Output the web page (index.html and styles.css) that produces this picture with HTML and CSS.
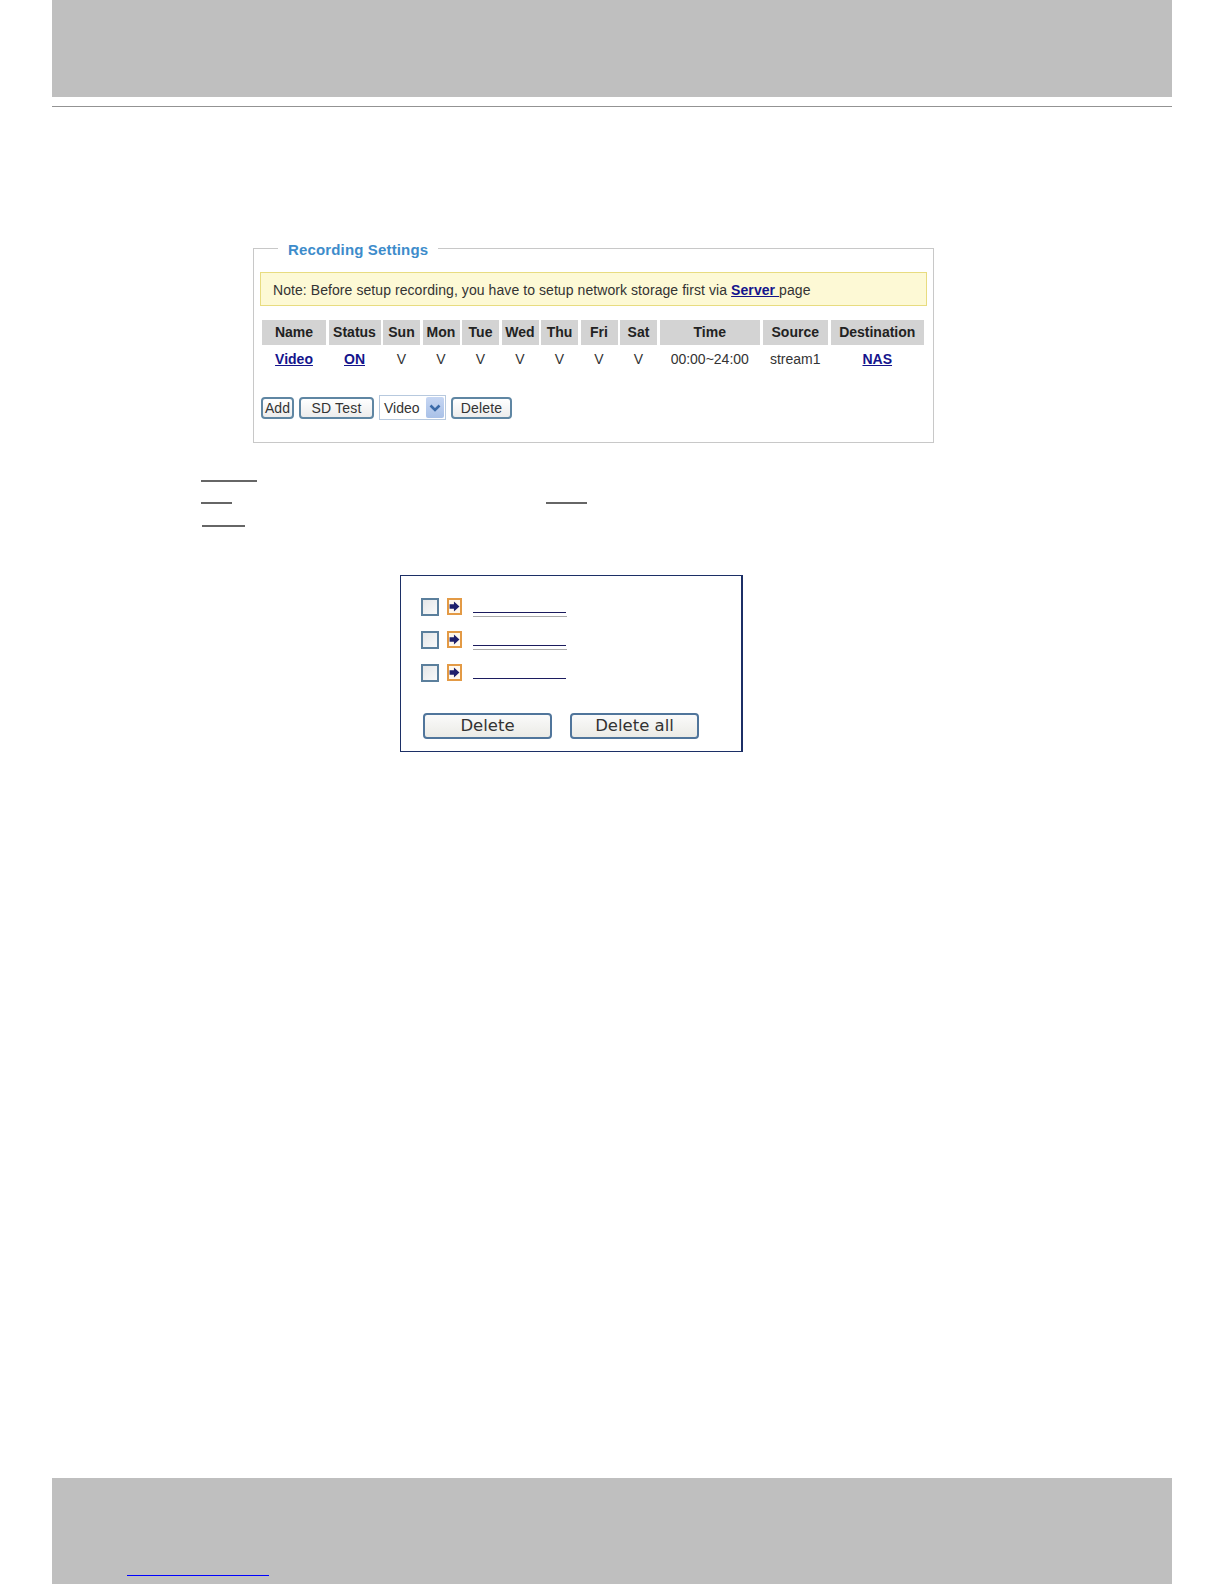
FILE: index.html
```html
<!DOCTYPE html>
<html lang="en">
<head>
<meta charset="utf-8">
<title>Recording Settings</title>
<link rel="stylesheet" href="styles.css">
</head>
<body>
<div class="page">
  <header class="top-band"></header>
  <div class="top-rule"></div>
  <main class="content">
    <fieldset class="panel">
      <legend class="panel-title">Recording Settings</legend>
      <p class="note">Note: Before setup recording, you have to setup network storage first via <a href="#" class="link">Server </a> page</p>
      <div class="rec-table" role="table">
        <div class="cell head">Name</div><div class="cell head">Status</div><div class="cell head">Sun</div><div class="cell head">Mon</div><div class="cell head">Tue</div><div class="cell head">Wed</div><div class="cell head">Thu</div><div class="cell head">Fri</div><div class="cell head">Sat</div><div class="cell head">Time</div><div class="cell head">Source</div><div class="cell head">Destination</div>
        <div class="cell"><a href="#" class="link">Video</a></div><div class="cell"><a href="#" class="link">ON</a></div><div class="cell">V</div><div class="cell">V</div><div class="cell">V</div><div class="cell">V</div><div class="cell">V</div><div class="cell">V</div><div class="cell">V</div><div class="cell">00:00~24:00</div><div class="cell">stream1</div><div class="cell"><a href="#" class="link">NAS</a></div>
      </div>
      <div class="controls">
        <button class="btn btn-add" type="button">Add</button>
        <button class="btn btn-test" type="button">SD Test</button>
        <div class="select"><span class="select-value">Video</span><span class="select-arrow"><svg width="14" height="14" viewBox="0 0 14 14"><path d="M2.5 4.5l4.5 4.5 4.5-4.5" fill="none" stroke="#3a6aa8" stroke-width="2.6"/></svg></span></div>
        <button class="btn btn-del" type="button">Delete</button>
      </div>
    </fieldset>

    <div class="dash-rows">
      <div class="dash-row r1"><span class="dash d1"></span></div>
      <div class="dash-row r2"><span class="dash d2"></span><span class="dash d3"></span></div>
      <div class="dash-row"><span class="dash d4"></span></div>
    </div>

    <section class="files">
      <div class="file-row">
        <span class="check"></span>
        <span class="arrow-icon"><svg width="11" height="11" viewBox="0 0 10 10"><path d="M0.5 3H4.5V0.5L9.5 5L4.5 9.5V7H0.5Z" fill="#1f1f6b"/></svg></span>
        <span class="file-lines"><span class="file-line"></span><span class="file-shadow"></span></span>
      </div>
      <div class="file-row">
        <span class="check"></span>
        <span class="arrow-icon"><svg width="11" height="11" viewBox="0 0 10 10"><path d="M0.5 3H4.5V0.5L9.5 5L4.5 9.5V7H0.5Z" fill="#1f1f6b"/></svg></span>
        <span class="file-lines"><span class="file-line"></span><span class="file-shadow"></span></span>
      </div>
      <div class="file-row">
        <span class="check"></span>
        <span class="arrow-icon"><svg width="11" height="11" viewBox="0 0 10 10"><path d="M0.5 3H4.5V0.5L9.5 5L4.5 9.5V7H0.5Z" fill="#1f1f6b"/></svg></span>
        <span class="file-lines"><span class="file-line"></span></span>
      </div>
      <div class="file-actions">
        <button class="big-btn" type="button">Delete</button>
        <button class="big-btn" type="button">Delete all</button>
      </div>
    </section>
  </main>
  <footer class="bottom-band"><span class="footer-link"></span></footer>
</div>
</body>
</html>
```

FILE: styles.css
```css
* { box-sizing: border-box; }
html, body { margin: 0; padding: 0; background: #fff; }
body { font-family: "Liberation Sans", Arial, sans-serif; color: #333; }
.page { height: 1584px; display: flex; flex-direction: column; overflow: hidden; }

.top-band { height: 97px; margin: 0 52px; background: #bfbfbf; flex: none; }
.top-rule { height: 1px; margin: 9px 52px 0; background: #939393; flex: none; }
.content { flex: 1; padding-top: 131px; }
.bottom-band { height: 106px; margin: 0 52px; background: #bfbfbf; flex: none; padding: 97px 0 0 75px; }
.footer-link { display: block; width: 142px; height: 1px; background: #0000ff; }

.panel { margin: 0 0 0 253px; width: 681px; height: 205px; padding: 14px 6px 0; border: 1px solid #c8c8c8; min-width: 0; }
.panel-title { margin-left: 18px; padding: 0 10px; font-size: 15px; font-weight: bold; color: #3d8ccb; letter-spacing: 0.15px; line-height: 20px; position: relative; top: 2px; }

.note { margin: 0; height: 34px; padding: 1px 0 0 12px; background: #fdf9d5; border: 1px solid #e8dc80; font-size: 14px; line-height: 32px; letter-spacing: 0.07px; color: #333; white-space: nowrap; }
.link { color: #14148c; font-weight: bold; text-decoration: underline; }

.rec-table { display: grid; grid-template-columns: 64px 52px repeat(7, 37px) 100.5px 65.5px 93.5px; grid-template-rows: 25px 28px; column-gap: 2.5px; margin: 14px 0 0 2px; font-size: 14px; }
.cell { text-align: center; line-height: 28px; color: #333; white-space: nowrap; }
.head { line-height: 25px; background: #d3d3d3; color: #222; font-weight: bold; }

.controls { display: flex; align-items: center; gap: 5px; margin: 22px 0 0 1px; height: 25px; }
.btn { height: 22px; padding: 0; font-family: inherit; font-size: 14px; letter-spacing: 0.2px; color: #333; background: linear-gradient(#fff, #ececec); border: 2px solid #5f86a3; border-radius: 4px; }
.btn-add { width: 33px; letter-spacing: 0; }
.btn-test { width: 75px; }
.btn-del { width: 61px; }
.select { width: 67px; height: 25px; display: flex; align-items: center; justify-content: space-between; padding: 0 1px 0 4px; border: 1px solid #b7c9de; font-size: 14px; color: #333; }
.select-arrow { width: 18px; height: 21px; display: flex; align-items: center; justify-content: center; background: linear-gradient(#c6d6f2, #a9c1e8); border-radius: 2px; }

.dash-rows { margin: 37px 0 0 201px; }
.dash-row { display: flex; height: 2px; margin-bottom: 21px; gap: 314px; }
.r1 { margin-bottom: 20px; }
.dash { display: block; height: 2px; background: #666; }
.d1 { width: 56px; }
.d2 { width: 31px; }
.d3 { width: 41px; }
.d4 { width: 43px; margin-left: 1px; }

.files { margin: 48px 0 0 400px; width: 343px; height: 177px; padding: 22px 0 0 20px; border: 1px solid #1c2f66; border-right-width: 2px; }
.file-row { display: flex; height: 18px; margin-bottom: 15px; align-items: flex-start; }
.check { width: 18px; height: 18px; border: 2px solid #5b7f9c; background: linear-gradient(135deg, #e4e6e8, #fafafa); flex: none; }
.arrow-icon { width: 15px; height: 17px; margin-left: 8px; border: 2px solid #e39a45; display: flex; align-items: center; justify-content: center; background: #fff8ee; flex: none; }
.file-lines { margin-left: 11px; padding-top: 14px; display: block; }
.file-line { display: block; width: 93px; height: 1px; background: #1c1c5e; }
.file-shadow { display: block; width: 94px; height: 1px; margin-top: 3px; background: #aaa; }
.file-actions { display: flex; gap: 18px; margin: 31px 0 0 2px; }
.big-btn { width: 129px; height: 26px; padding: 0 0 2px; font-family: "DejaVu Sans", Verdana, sans-serif; font-size: 16.5px; color: #333; background: linear-gradient(#fafafa, #ebebe6); border: 2px solid #50759b; border-radius: 4px; }
```
